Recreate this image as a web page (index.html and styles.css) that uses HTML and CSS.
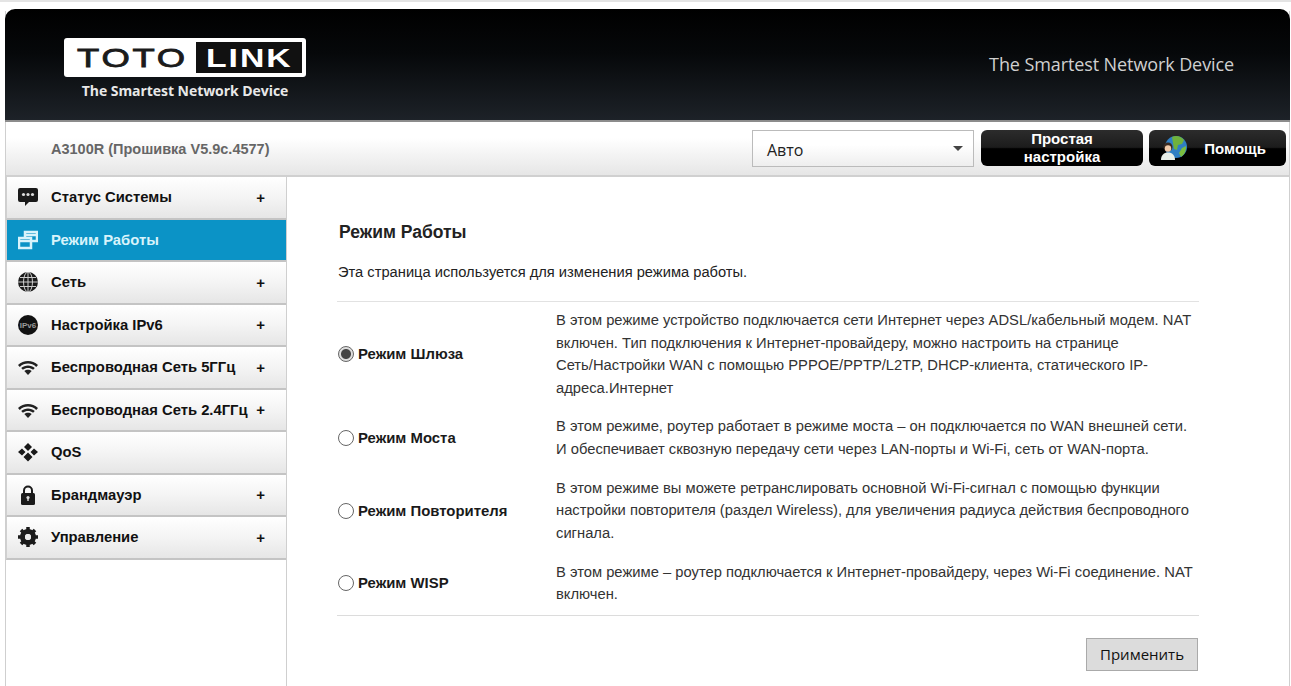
FILE: index.html
```html
<!DOCTYPE html>
<html lang="en">
<head>
    <meta charset="UTF-8">
    <meta name="viewport" content="width=device-width, initial-scale=1.0">
    <title>TOTOLINK A3100R</title>
    <link rel="stylesheet" href="styles.css">
</head>
<body>

    <div class="page">
        <header class="header">
            <div class="logo">
                <div class="logo-box">
                    <span class="logo-toto">TOTO</span>
                    <div class="logo-link"><span class="logo-link-text">LINK</span></div>
                </div>
                <div class="logo-tag">The Smartest Network Device</div>
            </div>
            <div class="slogan">The Smartest Network Device</div>
        </header>

        <div class="toolbar">
            <div class="model">A3100R (Прошивка V5.9c.4577)</div>
            <div class="lang-select">
                <span>Авто</span>
                <span class="caret"></span>
            </div>
            <a href="#" class="black-btn easy-btn">Простая настройка</a>
            <a href="#" class="black-btn help-btn">
                <svg class="help-icon" viewBox="0 0 26 26">
                    <circle cx="15" cy="12" r="11" fill="#2f7fc4"/>
                    <path d="M11 2c4-2 9-1 12 3l-2 4-4 1-1 5-3-1-1-6z" fill="#6fb23c"/>
                    <path d="M21 13l4-2c0 5-1 8-5 11l-2-4z" fill="#7bbd3f"/>
                    <circle cx="7" cy="12" r="4.500" fill="#3a2a20"/>
                    <circle cx="7" cy="13.500" r="3.200" fill="#f0c9a8"/>
                    <path d="M0 25c0-5 3-7.500 7-7.500s7 2.500 7 7.500z" fill="#e8efe9"/>
                </svg>
                <span>Помощь</span>
            </a>
        </div>

        <div class="content">
            <nav class="sidebar">
                <a href="#" class="nav-item">
                    <svg class="nav-icon" viewBox="0 0 20 20"><path d="M2 1h16a2 2 0 0 1 2 2v10a2 2 0 0 1-2 2h-7l-4 4v-4H2a2 2 0 0 1-2-2V3a2 2 0 0 1 2-2z" fill="#1a1a1a"/><circle cx="5.500" cy="7.500" r="1.600" fill="#ddd"/><circle cx="10" cy="7.500" r="1.600" fill="#ddd"/><circle cx="14.500" cy="7.500" r="1.600" fill="#ddd"/></svg>
                    <span class="nav-text">Статус Системы</span>
                    <span class="plus">+</span>
                </a>
                <a href="#" class="nav-item active">
                    <svg class="nav-icon" viewBox="0 0 20 20" fill="none" stroke="#d8f3fb" stroke-width="2.500"><path d="M7 8V2h12v9h-6"/><path d="M7 5h12"/><rect x="1" y="8" width="12" height="10"/><path d="M1 11h12"/></svg>
                    <span class="nav-text">Режим Работы</span>
                </a>
                <a href="#" class="nav-item">
                    <svg class="nav-icon" viewBox="0 0 20 20"><circle cx="10" cy="10" r="10" fill="#1a1a1a"/><g fill="none" stroke="#ccc" stroke-width="1"><ellipse cx="10" cy="10" rx="4.500" ry="10"/><path d="M10 0v20M0 10h20M2 5.500h16M2 14.500h16"/></g></svg>
                    <span class="nav-text">Сеть</span>
                    <span class="plus">+</span>
                </a>
                <a href="#" class="nav-item">
                    <svg class="nav-icon" viewBox="0 0 20 20"><circle cx="10" cy="10" r="10" fill="#111"/><text x="10" y="12.500" class="ipv6-text" text-anchor="middle">IPv6</text></svg>
                    <span class="nav-text">Настройка IPv6</span>
                    <span class="plus">+</span>
                </a>
                <a href="#" class="nav-item">
                    <svg class="nav-icon" viewBox="0 0 20 20"><use href="#wifi"/></svg>
                    <span class="nav-text">Беспроводная Сеть 5ГГц</span>
                    <span class="plus">+</span>
                </a>
                <a href="#" class="nav-item">
                    <svg class="nav-icon" viewBox="0 0 20 20"><use href="#wifi"/></svg>
                    <span class="nav-text">Беспроводная Сеть 2.4ГГц</span>
                    <span class="plus">+</span>
                </a>
                <a href="#" class="nav-item">
                    <svg class="nav-icon" viewBox="0 0 20 20" fill="#1a1a1a"><path d="M10 1l4 4-4 4-4-4zM4 6.500l3.500 3.500L4 13.500 0 10zM16 6.500l4 3.500-4 3.500-3.500-3.500zM10 10.500l4.500 4.500-4.500 4.500L5.500 15z"/></svg>
                    <span class="nav-text">QoS</span>
                </a>
                <a href="#" class="nav-item">
                    <svg class="nav-icon" viewBox="0 0 20 20"><path d="M6 9V5.500a4 4 0 0 1 8 0V9" fill="none" stroke="#1a1a1a" stroke-width="2"/><rect x="3" y="8" width="14" height="12" rx="1.500" fill="#1a1a1a"/><circle cx="10" cy="12.500" r="1.600" fill="#ddd"/><rect x="9.300" y="12.500" width="1.400" height="3.500" fill="#ddd"/></svg>
                    <span class="nav-text">Брандмауэр</span>
                    <span class="plus">+</span>
                </a>
                <a href="#" class="nav-item">
                    <svg class="nav-icon" viewBox="0 0 20 20"><circle cx="10" cy="10" r="5.500" fill="none" stroke="#1a1a1a" stroke-width="5"/><path d="M10 0v20M0 10h20M3 3l14 14M17 3L3 17" stroke="#1a1a1a" stroke-width="3.500" stroke-dasharray="3.500 13 3.500" fill="none"/><circle cx="10" cy="10" r="3" fill="#e8e8e8"/></svg>
                    <span class="nav-text">Управление</span>
                    <span class="plus">+</span>
                </a>
            </nav>

            <main class="main">
                <h2 class="title">Режим Работы</h2>
                <p class="intro">Эта страница используется для изменения режима работы.</p>

                <div class="modes">
                    <label class="mode-label"><input type="radio" name="mode" class="radio" checked>Режим Шлюза</label>
                    <div class="mode-desc">В этом режиме устройство подключается сети Интернет через ADSL/кабельный модем. NAT<br>включен. Тип подключения к Интернет-провайдеру, можно настроить на странице<br>Сеть/Настройки WAN с помощью PPPOE/PPTP/L2TP, DHCP-клиента, статического IP-<br>адреса.Интернет</div>

                    <label class="mode-label"><input type="radio" name="mode" class="radio">Режим Моста</label>
                    <div class="mode-desc">В этом режиме, роутер работает в режиме моста – он подключается по WAN внешней сети.<br>И обеспечивает сквозную передачу сети через LAN-порты и Wi-Fi, сеть от WAN-порта.</div>

                    <label class="mode-label"><input type="radio" name="mode" class="radio">Режим Повторителя</label>
                    <div class="mode-desc">В этом режиме вы можете ретранслировать основной Wi-Fi-сигнал с помощью функции<br>настройки повторителя (раздел Wireless), для увеличения радиуса действия беспроводного<br>сигнала.</div>

                    <label class="mode-label"><input type="radio" name="mode" class="radio">Режим WISP</label>
                    <div class="mode-desc">В этом режиме – роутер подключается к Интернет-провайдеру, через Wi-Fi соединение. NAT<br>включен.</div>
                </div>

                <div class="actions">
                    <button class="apply-btn">Применить</button>
                </div>
            </main>
        </div>
    </div>

    <svg class="defs" width="0" height="0">
        <symbol id="wifi" viewBox="0 0 20 20">
            <path d="M0 8C5.500 2.500 14.500 2.500 20 8l-1.800 1.900C13.500 5.500 6.500 5.500 1.800 9.900z" fill="#222"/>
            <path d="M3.200 11c3.700-3.500 9.900-3.500 13.600 0l-1.700 1.800c-3-2.500-7.200-2.500-10.200 0z" fill="#222"/>
            <path d="M6.300 14c2-1.800 5.400-1.800 7.400 0L10 18z" fill="#222"/>
        </symbol>
    </svg>

</body>
</html>
```

FILE: styles.css
```css
html, body {
    height: 100%;
    overflow: hidden;
}
body {
    margin: 0;
    padding: 9px 0 0 5px;
    box-sizing: border-box;
    background-color: #fff;
    border-top: 2px solid #e4e4e4;
    font-family: "Liberation Sans", Arial, sans-serif;
    color: #111;
}
a {
    text-decoration: none;
}
.page {
    width: 1285px;
    height: 100%;
    display: flex;
    flex-direction: column;
    border-right: 1px solid #cfcfcf;
    border-left: 1px solid #cfcfcf;
    box-sizing: border-box;
}
.defs {
    position: absolute;
}

/* header */
.header {
    height: 111px;
    margin-top: -2px;
    margin-left: -1px;
    margin-right: -1px;
    flex: none;
    display: flex;
    justify-content: space-between;
    background: linear-gradient(#000 0%, #06080a 40%, #1d2228 100%);
    border-radius: 10px 10px 0 0;
    border-bottom: 2px solid #8c8c8c;
    box-sizing: content-box;
}
.logo {
    margin: 29px 0 0 59px;
    width: 242px;
}
.logo-box {
    height: 39px;
    background-color: #fff;
    border-radius: 3px;
    display: flex;
    align-items: center;
    box-sizing: border-box;
    padding: 0 4px 0 13px;
    justify-content: space-between;
}
.logo-toto {
    display: inline-block;
    font-size: 26px;
    letter-spacing: 2px;
    -webkit-text-stroke: 0.8px #1b1b1b;
    color: #1b1b1b;
    line-height: 1;
    transform: scaleX(1.4);
    transform-origin: left center;
}
.logo-link {
    width: 106px;
    height: 31px;
    background-color: #111;
    display: flex;
    align-items: center;
    justify-content: center;
}
.logo-link-text {
    display: inline-block;
    color: #fff;
    font-size: 26px;
    font-weight: 700;
    letter-spacing: 1.500px;
    line-height: 1;
    transform: scaleX(1.3);
}
.logo-tag {
    margin-top: 5px;
    text-align: center;
    font-family: "Open Sans", sans-serif;
    font-size: 14px;
    font-weight: 700;
    letter-spacing: -0.05px;
    color: #e8e8e8;
    line-height: 18px;
}
.slogan {
    margin: 43px 56px 0 0;
    font-family: "Open Sans", sans-serif;
    font-size: 18px;
    letter-spacing: -0.1px;
    line-height: 24px;
    color: #d0d0d0;
}

/* toolbar */
.toolbar {
    height: 55px;
    flex: none;
    display: flex;
    align-items: center;
    box-sizing: border-box;
    padding: 0 3px 0 45px;
    gap: 6px;
    background: linear-gradient(#fff 30%, #e6e6e6 100%);
    border-bottom: 2px solid #d0d0d0;
}
.model {
    flex: 1;
    font-size: 14.500px;
    font-weight: 700;
    color: #666;
}
.lang-select {
    width: 222px;
    height: 37px;
    margin-right: 1px;
    box-sizing: border-box;
    display: flex;
    align-items: center;
    justify-content: space-between;
    padding: 2px 10px 0 14px;
    border: 1px solid #bbb;
    background: linear-gradient(#fff 40%, #eee 100%);
    font-family: "Open Sans", sans-serif;
    font-size: 16px;
    color: #222;
}
.caret {
    margin-top: -2px;
    border-left: 5px solid transparent;
    border-right: 5px solid transparent;
    border-top: 5px solid #444;
}
.black-btn {
    height: 36px;
    margin-top: -1px;
    box-sizing: border-box;
    border-radius: 6px;
    background: linear-gradient(#2c2c2c 0%, #1c1c1c 48%, #000 52%, #000 100%);
    color: #fff;
    font-size: 15px;
    font-weight: 700;
    display: flex;
    align-items: center;
    justify-content: center;
}
.easy-btn {
    width: 162px;
    padding: 0 40px;
    text-align: center;
    line-height: 18px;
}
.help-btn {
    width: 137px;
    padding: 0 20px 0 12px;
    justify-content: space-between;
}
.help-icon {
    width: 26px;
    height: 26px;
}

/* sidebar */
.content {
    flex: 1;
    display: flex;
    min-height: 0;
}
.sidebar {
    width: 281px;
    flex: none;
    box-sizing: border-box;
    border-right: 1px solid #cfcfcf;
}
.nav-item {
    height: 42.500px;
    box-sizing: border-box;
    display: flex;
    align-items: center;
    padding: 0 21px 0 11px;
    background: linear-gradient(#fff 0%, #f4f4f4 50%, #e6e6e6 100%);
    border-left: 1px solid #d0d0d0;
    border-bottom: 2px solid #c4c4c4;
    color: #111;
    font-size: 14.800px;
    font-weight: 700;
}
.nav-item.active {
    background: #0b93c6;
    color: #d8f3fb;
}
.nav-icon {
    width: 20px;
    height: 20px;
    flex: none;
    margin-right: 13px;
}
.nav-text {
    flex: 1;
    white-space: nowrap;
}
.plus {
    font-size: 15px;
    line-height: 1;
}
.ipv6-text {
    font-family: "Liberation Sans", Arial, sans-serif;
    font-size: 8px;
    font-weight: 700;
    fill: #999;
}

/* main */
.main {
    flex: 1;
    padding: 0 90px 0 50px;
}
.title {
    margin: 45px 0 0 2px;
    font-size: 17.500px;
    line-height: 20px;
    color: #222;
}
.intro {
    margin: 21px 0 0 1px;
    font-size: 14.700px;
    line-height: 18px;
    color: #222;
    padding-bottom: 20px;
}
.modes {
    display: grid;
    grid-template-columns: 219px 1fr;
    row-gap: 16.400px;
    align-items: center;
    padding: 7px 0 9px;
    border-top: 1px solid #e2e2e2;
    border-bottom: 1px solid #dcdcdc;
}
.mode-label {
    display: flex;
    align-items: center;
    gap: 4px;
    padding-left: 1px;
    font-size: 14.900px;
    font-weight: 700;
    color: #1a1a1a;
}
.radio {
    appearance: none;
    width: 16px;
    height: 16px;
    margin: 0;
    flex: none;
    border: 1px solid #666;
    border-radius: 50%;
    background-color: #fff;
}
.radio:checked {
    background: radial-gradient(circle, #444 0, #444 4.500px, #ddd 5.500px);
}
.mode-desc {
    font-size: 14.750px;
    line-height: 22.500px;
    color: #333;
}
.actions {
    display: flex;
    justify-content: flex-end;
    padding-top: 22px;
    padding-right: 1px;
}
.apply-btn {
    width: 112px;
    height: 33px;
    padding: 0;
    background-color: #dcdcdc;
    border: 1px solid #aaa;
    font-family: "Open Sans", sans-serif;
    font-size: 15px;
    color: #111;
}
```
